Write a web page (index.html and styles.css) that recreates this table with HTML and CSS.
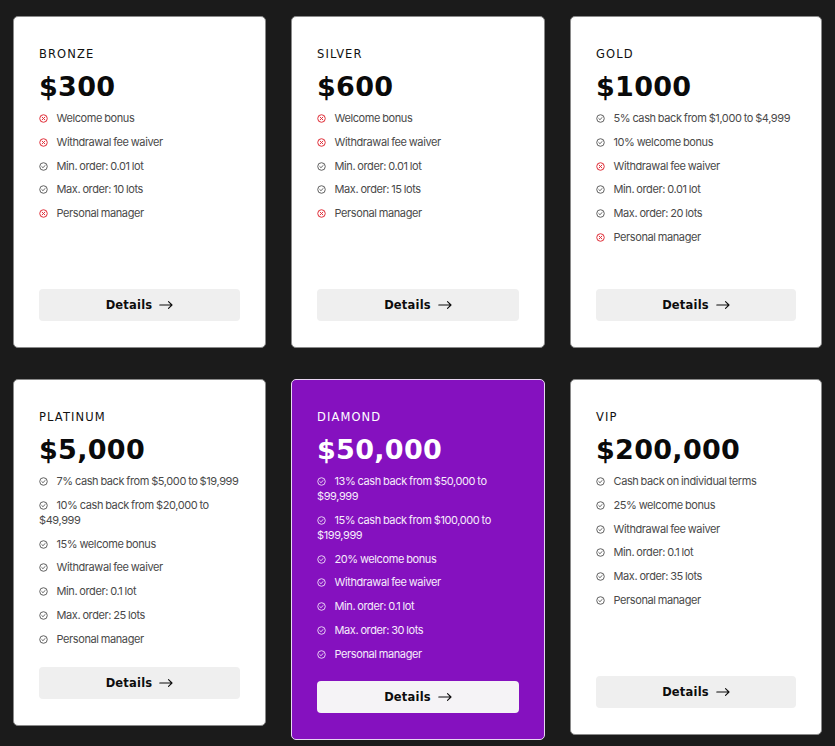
FILE: index.html
```html
<!DOCTYPE html>
<html lang="en">
<head>
<meta charset="utf-8">
<title>Account types</title>
<link rel="stylesheet" href="styles.css">
</head>
<body>
<svg width="0" height="0" class="defs" aria-hidden="true">
  <defs>
    <symbol id="ok" viewBox="0 0 10 10"><circle cx="5" cy="5" r="4.2" fill="none" stroke="currentColor" stroke-width="1"/><path d="M3.1 5.1 L4.4 6.3 L6.9 3.8" fill="none" stroke="currentColor" stroke-width="1" stroke-linecap="round" stroke-linejoin="round"/></symbol>
    <symbol id="no" viewBox="0 0 10 10"><circle cx="5" cy="5" r="4.2" fill="none" stroke="currentColor" stroke-width="1.1"/><path d="M3.4 3.4 L6.6 6.6 M6.6 3.4 L3.4 6.6" fill="none" stroke="currentColor" stroke-width="1.1" stroke-linecap="round"/></symbol>
    <symbol id="arrow" viewBox="0 0 14 10"><path d="M0.8 5 H13 M9.5 1.6 L13 5 L9.5 8.4" fill="none" stroke="currentColor" stroke-width="1.1" stroke-linecap="round" stroke-linejoin="round"/></symbol>
  </defs>
</svg>
<main class="grid">
  <section class="card card--r1">
    <h2 class="tier">BRONZE</h2>
    <div class="price">$300</div>
    <ul class="features">
      <li><svg class="ic no"><use href="#no"/></svg>Welcome bonus</li>
      <li><svg class="ic no"><use href="#no"/></svg>Withdrawal fee waiver</li>
      <li><svg class="ic ok"><use href="#ok"/></svg>Min. order: 0.01 lot</li>
      <li><svg class="ic ok"><use href="#ok"/></svg>Max. order: 10 lots</li>
      <li><svg class="ic no"><use href="#no"/></svg>Personal manager</li>
    </ul>
    <a class="btn" href="#">Details <svg class="arrow"><use href="#arrow"/></svg></a>
  </section>
  <section class="card card--r1">
    <h2 class="tier">SILVER</h2>
    <div class="price">$600</div>
    <ul class="features">
      <li><svg class="ic no"><use href="#no"/></svg>Welcome bonus</li>
      <li><svg class="ic no"><use href="#no"/></svg>Withdrawal fee waiver</li>
      <li><svg class="ic ok"><use href="#ok"/></svg>Min. order: 0.01 lot</li>
      <li><svg class="ic ok"><use href="#ok"/></svg>Max. order: 15 lots</li>
      <li><svg class="ic no"><use href="#no"/></svg>Personal manager</li>
    </ul>
    <a class="btn" href="#">Details <svg class="arrow"><use href="#arrow"/></svg></a>
  </section>
  <section class="card card--r1">
    <h2 class="tier">GOLD</h2>
    <div class="price">$1000</div>
    <ul class="features">
      <li><svg class="ic ok"><use href="#ok"/></svg>5% cash back from $1,000 to $4,999</li>
      <li><svg class="ic ok"><use href="#ok"/></svg>10% welcome bonus</li>
      <li><svg class="ic no"><use href="#no"/></svg>Withdrawal fee waiver</li>
      <li><svg class="ic ok"><use href="#ok"/></svg>Min. order: 0.01 lot</li>
      <li><svg class="ic ok"><use href="#ok"/></svg>Max. order: 20 lots</li>
      <li><svg class="ic no"><use href="#no"/></svg>Personal manager</li>
    </ul>
    <a class="btn" href="#">Details <svg class="arrow"><use href="#arrow"/></svg></a>
  </section>

  <section class="card card--plat">
    <h2 class="tier">PLATINUM</h2>
    <div class="price">$5,000</div>
    <ul class="features">
      <li><svg class="ic ok"><use href="#ok"/></svg>7% cash back from $5,000 to $19,999</li>
      <li><svg class="ic ok"><use href="#ok"/></svg>10% cash back from $20,000 to $49,999</li>
      <li><svg class="ic ok"><use href="#ok"/></svg>15% welcome bonus</li>
      <li><svg class="ic ok"><use href="#ok"/></svg>Withdrawal fee waiver</li>
      <li><svg class="ic ok"><use href="#ok"/></svg>Min. order: 0.1 lot</li>
      <li><svg class="ic ok"><use href="#ok"/></svg>Max. order: 25 lots</li>
      <li><svg class="ic ok"><use href="#ok"/></svg>Personal manager</li>
    </ul>
    <a class="btn" href="#">Details <svg class="arrow"><use href="#arrow"/></svg></a>
  </section>
  <section class="card card--diamond">
    <h2 class="tier">DIAMOND</h2>
    <div class="price">$50,000</div>
    <ul class="features">
      <li><svg class="ic ok"><use href="#ok"/></svg>13% cash back from $50,000 to $99,999</li>
      <li><svg class="ic ok"><use href="#ok"/></svg>15% cash back from $100,000 to $199,999</li>
      <li><svg class="ic ok"><use href="#ok"/></svg>20% welcome bonus</li>
      <li><svg class="ic ok"><use href="#ok"/></svg>Withdrawal fee waiver</li>
      <li><svg class="ic ok"><use href="#ok"/></svg>Min. order: 0.1 lot</li>
      <li><svg class="ic ok"><use href="#ok"/></svg>Max. order: 30 lots</li>
      <li><svg class="ic ok"><use href="#ok"/></svg>Personal manager</li>
    </ul>
    <a class="btn" href="#">Details <svg class="arrow"><use href="#arrow"/></svg></a>
  </section>
  <section class="card card--vip">
    <h2 class="tier">VIP</h2>
    <div class="price">$200,000</div>
    <ul class="features">
      <li><svg class="ic ok"><use href="#ok"/></svg>Cash back on individual terms</li>
      <li><svg class="ic ok"><use href="#ok"/></svg>25% welcome bonus</li>
      <li><svg class="ic ok"><use href="#ok"/></svg>Withdrawal fee waiver</li>
      <li><svg class="ic ok"><use href="#ok"/></svg>Min. order: 0.1 lot</li>
      <li><svg class="ic ok"><use href="#ok"/></svg>Max. order: 35 lots</li>
      <li><svg class="ic ok"><use href="#ok"/></svg>Personal manager</li>
    </ul>
    <a class="btn" href="#">Details <svg class="arrow"><use href="#arrow"/></svg></a>
  </section>
</main>
</body>
</html>
```
FILE: styles.css
```css
html, body {
  margin: 0;
  padding: 0;
  background: #1b1b1b;
}
body {
  font-family: Inter, "Noto Sans", sans-serif;
  width: 835px;
  height: 746px;
  overflow: hidden;
}
.defs {
  position: absolute;
  width: 0;
  height: 0;
}
.grid {
  display: grid;
  grid-template-columns: 253px 254px 252px;
  column-gap: 25px;
  row-gap: 31px;
  align-items: start;
  padding: 16px 13px 0 13px;
}
.card {
  box-sizing: border-box;
  background: #fff;
  border: 1px solid #8a8a8a;
  border-radius: 5px;
  padding: 29px 25px 26px 25px;
  display: flex;
  flex-direction: column;
  color: #111;
}
.card--r1 { height: 332px; }
.card--plat { height: 347px; }
.card--diamond {
  height: 361px;
  background: #8511bf;
  border-color: #e8d6f2;
  color: #fff;
}
.card--vip { height: 356px; }

.tier {
  margin: 0;
  font-family: "DejaVu Sans", sans-serif;
  font-weight: normal;
  font-size: 11.5px;
  letter-spacing: 1.1px;
  line-height: 16px;
  color: #111;
}
.price {
  margin-top: 8px;
  font-family: "DejaVu Sans", sans-serif;
  font-weight: bold;
  font-size: 27px;
  line-height: 34px;
  letter-spacing: 0.3px;
  color: #0a0a0a;
}
.card--diamond .tier,
.card--diamond .price { color: #fff; }

.features {
  list-style: none;
  margin: 7px 0 0 0;
  padding: 0;
  display: flex;
  flex-direction: column;
  gap: 8.8px;
}
.features li {
  font-size: 11px;
  line-height: 15px;
  color: #4a4a4a;
  letter-spacing: -0.4px;
  word-spacing: -0.5px;
}
.card--diamond .features li { color: #f6ecfb; }
.ic {
  width: 9px;
  height: 9px;
  margin-right: 8.5px;
  vertical-align: -1px;
}
.ic.ok { color: #505050; }
.ic.no { color: #e0313b; }
.card--diamond .ic.ok { color: #f0e2f8; }

.btn {
  margin-top: auto;
  height: 32px;
  border-radius: 4px;
  background: #efefef;
  display: flex;
  align-items: center;
  justify-content: center;
  gap: 7px;
  text-decoration: none;
  font-family: "DejaVu Sans", sans-serif;
  font-weight: bold;
  font-size: 11.5px;
  letter-spacing: 0.2px;
  color: #0d0d0d;
}
.card--diamond .btn { background: #f5f3f6; }
.arrow {
  width: 14px;
  height: 10px;
}
```
